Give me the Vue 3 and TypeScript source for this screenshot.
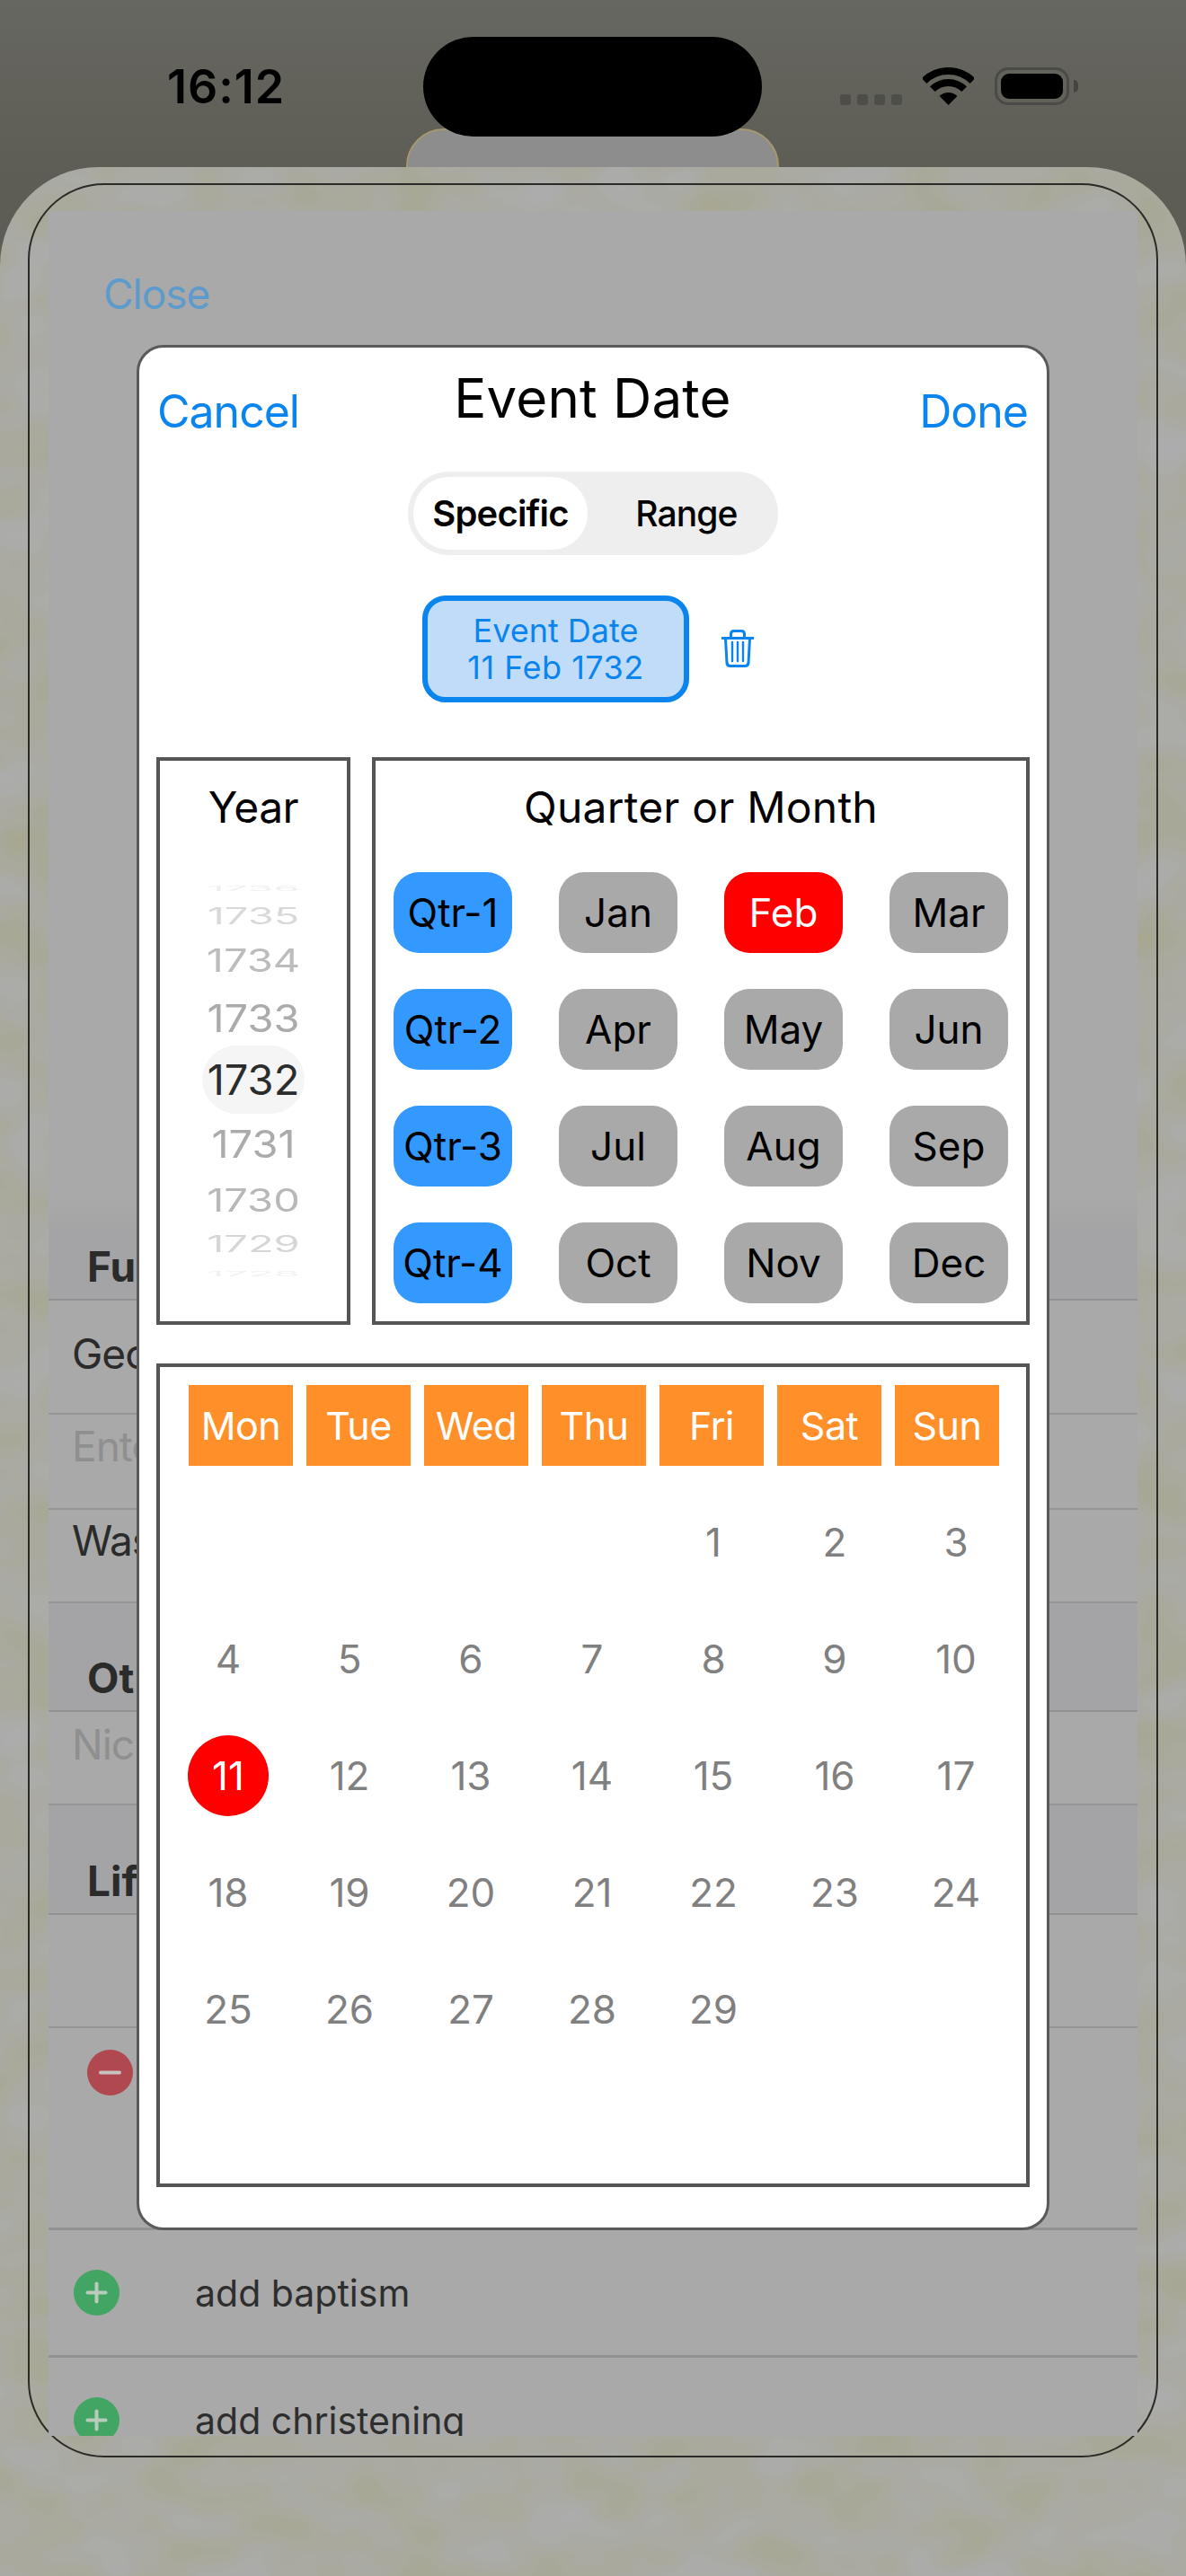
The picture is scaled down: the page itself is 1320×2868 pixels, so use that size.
<script setup lang="ts">
interface WheelItem { y: number; h: number; s: number; c: string }
const wheel: WheelItem[] = [
  { y: 1736, h: 30, s: 0.15, c: '#efefef' },
  { y: 1735, h: 32.3, s: 0.53, c: '#d9d9d9' },
  { y: 1734, h: 65, s: 0.76, c: '#bcbcbc' },
  { y: 1733, h: 65.2, s: 0.9, c: '#ababab' },
  { y: 1732, h: 71, s: 1, c: '#2c2c2c' },
  { y: 1731, h: 74, s: 0.9, c: '#ababab' },
  { y: 1730, h: 49, s: 0.76, c: '#b8b8b8' },
  { y: 1729, h: 48.5, s: 0.53, c: '#d6d6d6' },
  { y: 1728, h: 18, s: 0.15, c: '#f1f1f1' },
]
const months = [
  ['Qtr-1', 'Jan', 'Feb', 'Mar'],
  ['Qtr-2', 'Apr', 'May', 'Jun'],
  ['Qtr-3', 'Jul', 'Aug', 'Sep'],
  ['Qtr-4', 'Oct', 'Nov', 'Dec'],
].flat()
const weekdays = ['Mon', 'Tue', 'Wed', 'Thu', 'Fri', 'Sat', 'Sun']
const blanks = [1, 2, 3, 4]
const days = Array.from({ length: 29 }, (_, i) => i + 1)
function monthClass(m: string): string {
  if (m.startsWith('Qtr')) return 'qtr'
  return m === 'Feb' ? 'sel' : ''
}
</script>

<template>
  <div class="page">
    <div class="status">
      <span class="time">16:12</span>
      <div class="status-icons">
        <div class="dots"><i></i><i></i><i></i><i></i></div>
        <svg class="wifi" width="57" height="42" viewBox="0 0 57 42">
          <path d="M28.5 42 L18.6 32.1 A14 14 0 0 1 38.4 32.1 Z" fill="#000" />
          <path d="M10.8 24.3 A25 25 0 0 1 46.2 24.3" fill="none" stroke="#000" stroke-width="8" />
          <path d="M1.6 15.1 A38 38 0 0 1 55.4 15.1" fill="none" stroke="#000" stroke-width="8" />
        </svg>
        <div class="battery"><b></b></div>
        <span class="nub"></span>
      </div>
    </div>
    <div class="back-card"></div>
    <div class="island"></div>

    <div class="sheet">
      <svg class="texture" width="1320" height="2682">
        <filter id="mottle" x="0" y="0" width="100%" height="100%" color-interpolation-filters="sRGB">
          <feTurbulence type="fractalNoise" baseFrequency="0.012 0.018" numOctaves="2" seed="7" />
          <feColorMatrix type="matrix" values="0.03 0 0 0 0.65  0.03 0 0 0 0.65  0.16 0 0 0 0.55  0 0 0 0 1" />
        </filter>
        <rect width="1320" height="2682" filter="url(#mottle)" />
      </svg>
      <div class="frame"></div>
      <div class="panel">
        <div class="close-row">Close</div>
        <div class="band"><span>Full Name</span></div>
        <div class="row inset"><span class="label">George</span></div>
        <div class="row inset h105"><span class="hint up">Enter</span></div>
        <div class="row h104"><span class="label up">Was</span></div>
        <div class="band short inset"><span>Other</span></div>
        <div class="row h104"><span class="hint up2">Nickname</span></div>
        <div class="band short lif"><span>Life</span></div>
        <div class="row h126"></div>
        <div class="row event">
          <svg class="badge" width="51" height="51" viewBox="0 0 51 51">
            <circle cx="25.5" cy="25.5" r="25.5" fill="#b0484f" />
            <rect x="13" y="23.5" width="25" height="4" rx="2" fill="#c9c2c2" />
          </svg>
        </div>
        <div class="row add">
          <svg class="badge" width="51" height="51" viewBox="0 0 51 51">
            <circle cx="25.5" cy="25.5" r="25.5" fill="#42a564" />
            <rect x="13.5" y="23.5" width="24" height="4" rx="2" fill="#b9cbbb" />
            <rect x="23.5" y="13.5" width="4" height="24" rx="2" fill="#b9cbbb" />
          </svg>
          <span class="add-text">add baptism</span>
        </div>
        <div class="row add">
          <svg class="badge" width="51" height="51" viewBox="0 0 51 51">
            <circle cx="25.5" cy="25.5" r="25.5" fill="#42a564" />
            <rect x="13.5" y="23.5" width="24" height="4" rx="2" fill="#b9cbbb" />
            <rect x="23.5" y="13.5" width="4" height="24" rx="2" fill="#b9cbbb" />
          </svg>
          <span class="add-text">add christening</span>
        </div>
      </div>
    </div>

    <div class="modal">
      <header class="m-head">
        <span class="link">Cancel</span>
        <span class="title">Event Date</span>
        <span class="link end">Done</span>
      </header>
      <div class="seg-row">
        <div class="seg">
          <span class="seg-on">Specific</span>
          <span class="seg-off">Range</span>
        </div>
      </div>
      <div class="chip-row">
        <div class="chip"><span>Event Date</span><span class="chip-date">11 Feb 1732</span></div>
        <svg class="trash" width="36" height="42" viewBox="0 0 36 42" fill="none" stroke="#0a84ee" stroke-width="3">
          <path d="M0 9.5 H36" stroke-linecap="round" />
          <path d="M10.5 9 V5 Q10.5 1.5 14 1.5 H22 Q25.5 1.5 25.5 5 V9" />
          <path d="M4.5 10 L6 37 Q6.3 40.5 10 40.5 H26 Q29.7 40.5 30 37 L31.5 10" />
          <path d="M12 14 V35 M18 14 V35 M24 14 V35" stroke-width="2.4" stroke-linecap="round" />
        </svg>
      </div>
      <div class="pickers">
        <section class="box year">
          <h3>Year</h3>
          <div class="wheel">
            <div v-for="w in wheel" :key="w.y" class="wheel-row" :style="{ height: w.h + 'px' }">
              <span v-if="w.y === 1732" class="pill"></span>
              <span class="wheel-num" :style="{ transform: `scaleY(${w.s})`, color: w.c }">{{ w.y }}</span>
            </div>
          </div>
        </section>
        <section class="box quarter">
          <h3 class="wide">Quarter or Month</h3>
          <div class="months">
            <span v-for="m in months" :key="m" class="month" :class="monthClass(m)">{{ m }}</span>
          </div>
        </section>
      </div>
      <section class="box cal">
        <div class="weekdays"><span v-for="d in weekdays" :key="d">{{ d }}</span></div>
        <div class="days">
          <span v-for="b in blanks" :key="'b' + b" class="day"></span>
          <span v-for="d in days" :key="d" class="day"><em :class="{ today: d === 11 }">{{ d }}</em></span>
        </div>
      </section>
    </div>
  </div>
</template>

<style scoped>
.page {
  position: relative;
  width: 1320px;
  height: 2868px;
  overflow: hidden;
  background: linear-gradient(#676761, #5d5d55 200px);
  font-family: Inter, "Liberation Sans", sans-serif;
}
.status {
  height: 186px;
  box-sizing: border-box;
  padding: 67px 0 0 186px;
  display: flex;
  align-items: flex-start;
}
.time {
  font-size: 52px;
  line-height: 60px;
  font-weight: 600;
  color: #000;
  letter-spacing: 1px;
}
.status-icons {
  margin: 8px 0 0 618px;
  display: flex;
  align-items: flex-end;
  height: 42px;
}
.dots { display: flex; gap: 7px; margin-right: 23px; }
.dots i { width: 12px; height: 12px; border-radius: 3px; background: #4e4e49; display: block; }
.wifi { display: block; margin-right: 23px; }
.battery {
  width: 83px;
  height: 42px;
  box-sizing: border-box;
  border: 3px solid #4a4a46;
  border-radius: 15px;
  padding: 4px;
}
.battery b { display: block; height: 100%; background: #000; border-radius: 9px; }
.nub { width: 5px; height: 14px; background: #45453f; border-radius: 0 5px 5px 0; margin: 0 0 14px 5px; }
.back-card {
  position: absolute;
  left: 452px;
  top: 143px;
  width: 415px;
  height: 60px;
  box-sizing: border-box;
  background: #8d8d8d;
  border: 2px solid #a5976f;
  border-radius: 42px 42px 0 0;
}
.island {
  position: absolute;
  left: 471px;
  top: 41px;
  width: 377px;
  height: 111px;
  background: #000;
  border-radius: 56px;
}
.sheet {
  position: relative;
  height: 2682px;
  border-radius: 110px 110px 0 0;
  overflow: hidden;
  box-sizing: border-box;
  padding: 49px 54px 0;
}
.texture { position: absolute; left: 0; top: 0; display: block; }
.frame {
  position: absolute;
  left: 31px;
  top: 18px;
  width: 1258px;
  height: 2532px;
  box-sizing: border-box;
  border: 2px solid #2a2a26;
  border-radius: 85px;
}
.panel {
  position: relative;
  height: 2477px;
  overflow: hidden;
  background: #a9a9a9;
  color: #2b2b2b;
  font-size: 46px;
}
.close-row {
  height: 1100px;
  box-sizing: border-box;
  padding: 64px 0 0 61px;
  line-height: 56px;
  color: #5c9bcb;
  font-size: 46px;
  letter-spacing: -1px;
}
.band {
  height: 113px;
  box-sizing: border-box;
  background: linear-gradient(#a9a9a9, #a4a4a6 40px);
  border-bottom: 2px solid #929292;
  padding: 47px 0 0 43px;
  line-height: 56px;
  font-weight: 700;
}
.band.short { height: 121px; padding-top: 55px; background: #a4a4a6; }
.band.lif { height: 122px; padding-top: 56px; }
.row {
  display: flex;
  align-items: center;
  height: 127px;
  box-sizing: border-box;
  border-bottom: 2px solid #959595;
  padding-left: 26px;
}
.h105 { height: 106px; }
.h104 { height: 104px; }
.h126 { height: 126px; }
.label { color: #2b2b2b; margin-top: -8px; letter-spacing: -1px; }
.hint { color: #8f8f8f; margin-top: -8px; letter-spacing: -1px; }
.up { margin-top: -34px; }
.up2 { margin-top: -30px; }
.event { height: 225px; align-items: flex-start; padding: 24px 0 0 43px; border-bottom: 3px solid #929292; }
.add { height: 142px; padding-left: 28px; border-bottom: 3px solid #929292; }
.badge { display: block; flex: none; }
.add-text { margin-left: 84px; font-size: 41px; color: #2e2e2e; }

.modal {
  position: absolute;
  left: 152px;
  top: 384px;
  width: 1016px;
  height: 2099px;
  box-sizing: border-box;
  background: #fff;
  border: 3px solid #5a5a5a;
  border-radius: 30px;
  color: #000;
}
.m-head {
  display: grid;
  grid-template-columns: 1fr auto 1fr;
  height: 138px;
  padding: 0 21px 0 20px;
  align-items: start;
}
.title { font-size: 60px; line-height: 72px; margin-top: 20px; letter-spacing: 0.2px; }
.link { font-size: 50px; line-height: 60px; margin-top: 41px; color: #0a84ee; letter-spacing: -1px; }
.end { text-align: right; }
.seg-row { display: flex; justify-content: center; margin-bottom: 45px; }
.seg {
  width: 412px;
  height: 93px;
  box-sizing: border-box;
  padding: 6px;
  background: #eeeeee;
  border-radius: 46px;
  display: flex;
  align-items: center;
}
.seg-on {
  width: 194px;
  height: 81px;
  border-radius: 40px;
  background: #fff;
  display: flex;
  align-items: center;
  justify-content: center;
  font-size: 40px;
  font-weight: 600;
  letter-spacing: -0.8px;
}
.seg-off { flex: 1; padding-left: 14px; text-align: center; font-size: 39px; font-weight: 500; letter-spacing: -0.9px; }
.chip-row { display: flex; align-items: center; padding-left: 315px; gap: 36px; margin-bottom: 61px; }
.chip {
  width: 297px;
  height: 119px;
  box-sizing: border-box;
  border: 6px solid #0a84ee;
  border-radius: 26px;
  background: #c0dcf8;
  color: #0a84ee;
  display: flex;
  flex-direction: column;
  align-items: center;
  justify-content: center;
  font-size: 36px;
  line-height: 41px;
}
.chip-date { letter-spacing: 0.5px; }
.trash { display: block; margin-top: -2px; }
.pickers { display: flex; gap: 24px; padding-left: 19px; margin-bottom: 43px; }
.box { box-sizing: border-box; border: 4px solid #555; background: #fff; }
.year { width: 216px; height: 632px; }
.quarter { width: 732px; height: 632px; }
h3 {
  margin: 24px 0 0;
  font-size: 48px;
  line-height: 56px;
  font-weight: 400;
  text-align: center;
  letter-spacing: -0.5px;
}
h3.wide { letter-spacing: 0.2px; }
.wheel { margin-top: 47px; }
.wheel-row { position: relative; display: flex; align-items: center; justify-content: center; overflow: visible; }
.wheel-num { position: relative; font-size: 47px; line-height: 40px; display: block; }
.pill {
  position: absolute;
  left: 47px;
  top: -2px;
  width: 114px;
  height: 76px;
  border-radius: 38px;
  background: #f5f5f5;
}
.months {
  margin: 44px 0 0 20px;
  display: grid;
  grid-template-columns: repeat(4, 132px);
  grid-auto-rows: 90px;
  column-gap: 52px;
  row-gap: 40px;
}
.month {
  display: flex;
  align-items: center;
  justify-content: center;
  background: #a9a9a9;
  border-radius: 28px;
  font-size: 44px;
}
.qtr { background: #3399ff; }
.sel { background: #ff0000; color: #fff; }
.cal { width: 972px; height: 917px; margin-left: 19px; padding-top: 20px; }
.weekdays { display: grid; grid-template-columns: repeat(7, 116px); column-gap: 15px; margin-left: 32px; }
.weekdays span {
  height: 90px;
  display: flex;
  align-items: center;
  justify-content: center;
  background: #ff9029;
  color: #fff;
  font-size: 43px;
  letter-spacing: -0.5px;
}
.days { margin: 20px 0 0 8.5px; display: grid; grid-template-columns: repeat(7, 135px); grid-auto-rows: 130px; }
.day { display: flex; align-items: center; justify-content: center; }
.day em {
  width: 90px;
  height: 90px;
  display: flex;
  align-items: center;
  justify-content: center;
  border-radius: 50%;
  font-style: normal;
  font-size: 44px;
  color: #808080;
}
.day em.today { background: #ff0000; color: #fff; }
</style>
